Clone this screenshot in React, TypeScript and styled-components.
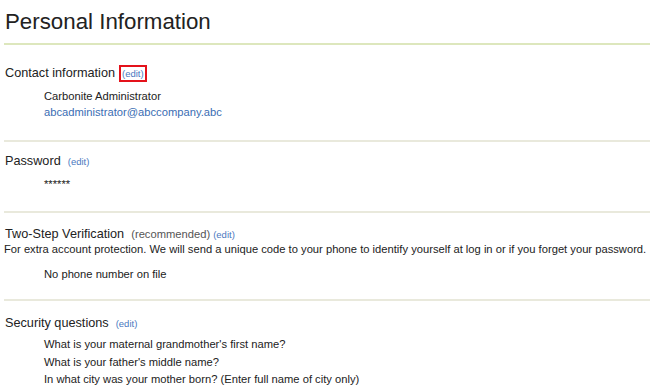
import React from 'react';
import styled, { createGlobalStyle } from 'styled-components';

const GlobalStyle = createGlobalStyle`
  body {
    margin: 0;
    background: #ffffff;
    font-family: "Liberation Sans", Arial, sans-serif;
    color: #222222;
  }
`;

const Page = styled.div`
  width: 650px;
  height: 391px;
  overflow: hidden;
  padding-left: 4px;
  box-sizing: border-box;
`;

const Title = styled.h1`
  margin: 0;
  padding: 9px 0 0 1px;
  height: 34px;
  font-size: 22.3px;
  font-weight: normal;
  line-height: 26px;
  color: #222222;
  border-bottom: 2px solid #dde7bd;
`;

const Section = styled.section<{ $top?: number; $bottom?: number }>`
  padding-top: ${p => p.$top ?? 11}px;
  padding-bottom: ${p => p.$bottom ?? 20}px;
  border-bottom: 2px solid #e9e9dc;

  &:last-child {
    border-bottom: none;
  }
`;

const Heading = styled.div`
  font-size: 12.7px;
  line-height: 16px;
  color: #222222;
  padding-left: 1px;
`;

const Note = styled.span`
  font-size: 11.2px;
  color: #555555;
  margin-left: 7px;
`;

const Edit = styled.a<{ $boxed?: boolean; $near?: boolean }>`
  font-size: 9.5px;
  color: #4a78c0;
  text-decoration: none;
  margin-left: ${p => (p.$boxed ? 4 : p.$near ? 3 : 7)}px;
  padding: ${p => (p.$boxed ? '1px 1px' : '0')};
  border: ${p => (p.$boxed ? '2px solid #e4121b' : 'none')};
`;

const Description = styled.div`
  font-size: 11.2px;
  line-height: 13px;
`;

const Details = styled.div<{ $gap?: number; $line?: number }>`
  margin-top: ${p => p.$gap ?? 7}px;
  padding-left: 40px;
  font-size: 11.2px;
  line-height: ${p => p.$line ?? 16}px;
`;

const Line = styled.div``;

const Email = styled.a`
  color: #3a6db3;
  text-decoration: none;
`;

const Mask = styled.div`
  font-size: 11.2px;
`;

export default function App() {
  return (
    <Page>
      <GlobalStyle />
      <Title>Personal Information</Title>

      <Section $top={20} $bottom={20}>
        <Heading>
          Contact information<Edit $boxed>(edit)</Edit>
        </Heading>
        <Details $gap={6}>
          <Line>Carbonite Administrator</Line>
          <Email>abcadministrator@abccompany.abc</Email>
        </Details>
      </Section>

      <Section $top={11} $bottom={19}>
        <Heading>
          Password<Edit>(edit)</Edit>
        </Heading>
        <Details $gap={6}>
          <Mask>******</Mask>
        </Details>
      </Section>

      <Section $top={13} $bottom={17}>
        <Heading>
          Two-Step Verification<Note>(recommended)</Note>
          <Edit $near>(edit)</Edit>
        </Heading>
        <Description>
          For extra account protection. We will send a unique code to your phone to identify yourself at log in or if you forget your password.
        </Description>
        <Details $gap={10}>
          <Line>No phone number on file</Line>
        </Details>
      </Section>

      <Section $top={14}>
        <Heading>
          Security questions<Edit>(edit)</Edit>
        </Heading>
        <Details $gap={4} $line={17.5}>
          <Line>What is your maternal grandmother's first name?</Line>
          <Line>What is your father's middle name?</Line>
          <Line>In what city was your mother born? (Enter full name of city only)</Line>
        </Details>
      </Section>
    </Page>
  );
}
